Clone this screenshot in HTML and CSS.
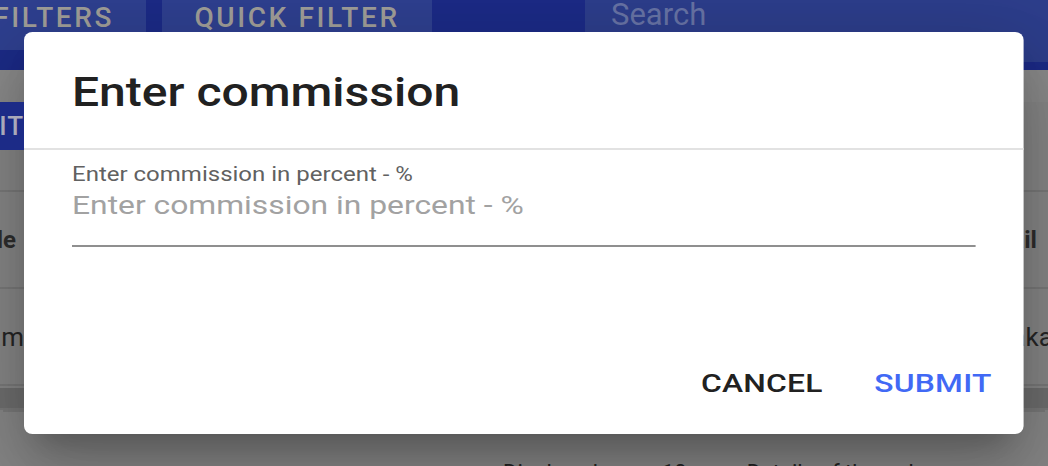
FILE: index.html
```html
<!DOCTYPE html>
<html lang="en">
<head>
    <meta charset="UTF-8">
    <meta name="viewport" content="width=device-width, initial-scale=1.0">
    <title>Enter commission</title>
    <link rel="stylesheet" href="styles.css">
</head>
<body>
    <div class="page">
        <div class="topbar">
            <div class="tab tab-first">FILTERS</div>
            <div class="tab tab-quick">QUICK FILTER</div>
            <div class="search">Search</div>
        </div>
        <div class="toolbar">
            <div class="edit-btn"><span>EDIT</span></div>
        </div>
        <div class="table">
            <div class="row row-head">
                <div class="cell cell-left"><span>Title</span></div>
                <div class="cell cell-right"><span>Email</span></div>
            </div>
            <div class="row row-data">
                <div class="cell cell-left"><span>Adam</span></div>
                <div class="cell cell-right"><span>Anakaka@mail.com</span></div>
            </div>
            <div class="scroll"></div>
        </div>
        <div class="footer">Displayed rows: 10 &nbsp;&nbsp;&nbsp;&nbsp;&nbsp;&nbsp;&nbsp;&nbsp;&nbsp; Details of the order</div>
    </div>

    <div class="dialog">
        <h2 class="dialog-title">Enter commission</h2>
        <div class="dialog-content">
            <label class="field">
                <span class="field-label">Enter commission in percent - %</span>
                <input class="field-input" type="text" placeholder="Enter commission in percent - %">
            </label>
        </div>
        <div class="dialog-actions">
            <button class="btn">CANCEL</button>
            <button class="btn btn-primary">SUBMIT</button>
        </div>
    </div>
</body>
</html>
```

FILE: styles.css
```css
html, body {
    margin: 0;
    height: 100%;
}
body {
    font-family: Roboto, "Liberation Sans", sans-serif;
    background-color: #878787;
    overflow: hidden;
}
.page {
    height: 466px;
    display: flex;
    flex-direction: column;
}
.topbar {
    height: 70px;
    flex-shrink: 0;
    background-color: #1c2b87;
    display: flex;
    align-items: flex-start;
    gap: 16px;
}
.tab {
    height: 50px;
    background-color: #2f4090;
    color: #a19f99;
    font-size: 28px;
    font-weight: 500;
    letter-spacing: 2.6px;
    display: flex;
    align-items: center;
    justify-content: flex-end;
    box-sizing: border-box;
    padding: 0 34px 16px;
    overflow: hidden;
    white-space: nowrap;
}
.tab-first {
    width: 146px;
    padding-right: 32px;
}
.tab-quick {
    width: 270px;
    justify-content: center;
}
.search {
    margin-left: 137px;
    flex: 1;
    height: 62px;
    background-color: #2d3e8c;
    color: #6874a6;
    font-size: 31px;
    padding: 0 26px 34px;
    box-sizing: border-box;
    display: flex;
    align-items: center;
}
.toolbar {
    height: 32px;
    flex-shrink: 0;
    background-color: #8b8b8b;
}
.edit-btn {
    margin-top: 32px;
    width: 24px;
    height: 48px;
    background-color: #1c2b87;
    color: #a9a9b9;
    font-size: 26px;
    font-weight: 500;
    letter-spacing: 1px;
    display: flex;
    align-items: center;
    justify-content: flex-end;
    overflow: hidden;
    position: relative;
    z-index: 1;
}
.table {
    margin-top: 88px;
    border-top: 2px solid #7a7a7a;
}
.row {
    height: 95px;
    border-bottom: 2px solid #7a7a7a;
    display: flex;
    justify-content: space-between;
    align-items: center;
    font-size: 24px;
    color: #262626;
}
.row-head {
    font-weight: 700;
    color: #2e2e2e;
}
.row-data {
    font-size: 26px;
}
.cell {
    display: flex;
    overflow: hidden;
    white-space: nowrap;
}
.cell-left {
    width: 24px;
    justify-content: flex-end;
}
.row-head .cell-left {
    width: 16px;
    padding-right: 8px;
}
.cell-right {
    width: 71px;
    justify-content: flex-start;
}
.row-data .cell-right {
    width: 68px;
}
.scroll {
    height: 20px;
    margin-top: 2px;
    background-color: #6f6f6f;
    border-bottom: 2px solid #7a7a7a;
    margin-bottom: 4px;
    box-shadow: 0 5px 0 -3px #7a7a7a;
}
.footer {
    margin-top: 46px;
    padding-left: 503px;
    font-size: 22px;
    color: #222;
    white-space: nowrap;
}

.dialog {
    position: absolute;
    left: 24px;
    top: 32px;
    width: 833.33px;
    height: 402px;
    transform: scaleX(1.2);
    transform-origin: left top;
    background: white;
    border-radius: 7px / 8px;
    box-shadow: 0 20px 26px -12px rgba(0, 0, 0, 0.2), 0 42px 66px 5px rgba(0, 0, 0, 0.14), 0 16px 80px 14px rgba(0, 0, 0, 0.12);
    display: flex;
    flex-direction: column;
}
.dialog-title {
    margin: 0;
    padding: 37px 40px 31px;
    font-size: 40px;
    line-height: 48px;
    font-weight: 500;
    color: #212121;
    border-bottom: 2px solid #e2e2e2;
}
.dialog-content {
    padding: 12px 40px 0;
    flex: 1;
}
.field {
    display: flex;
    flex-direction: column;
}
.field-label {
    font-size: 20px;
    line-height: 24px;
    color: #616161;
}
.field-input {
    margin-top: 3px;
    font-family: inherit;
    font-size: 26.5px;
    height: 32px;
    line-height: 32px;
    padding: 0 0 24px;
    border: none;
    border-bottom: 2px solid #8f8f8f;
    outline: none;
    background: transparent;
    color: #212121;
}
.field-input::placeholder {
    color: #a2a2a2;
    opacity: 1;
}
.dialog-actions {
    display: flex;
    justify-content: flex-end;
    gap: 27px;
    padding: 0 19px 31px;
}
.btn {
    font-family: inherit;
    font-size: 26.5px;
    line-height: 32px;
    font-weight: 500;
    letter-spacing: 0.2px;
    background: none;
    border: none;
    padding: 4px 8px;
    color: #212121;
    cursor: pointer;
}
.btn-primary {
    color: #4169f5;
}
```
